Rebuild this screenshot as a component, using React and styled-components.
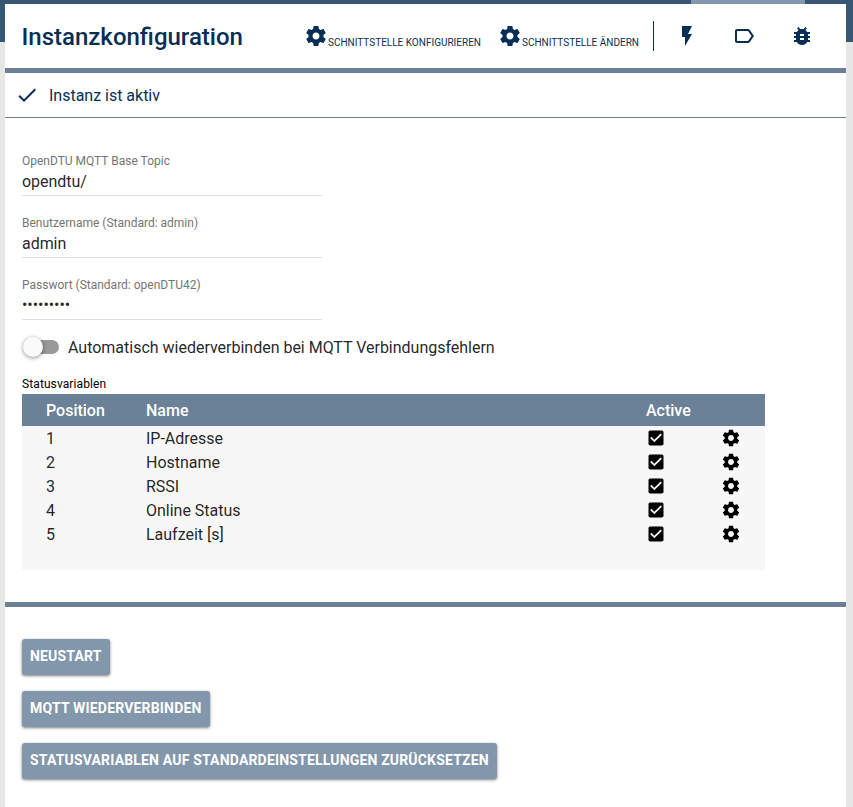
import React from 'react';
import styled, { createGlobalStyle } from 'styled-components';

const Global = createGlobalStyle`
  * { box-sizing: border-box; }
  body { margin: 0; background: #e6e6e6; font-family: Roboto, sans-serif; color: rgba(0,0,0,.87); overflow: hidden; }
`;

const Page = styled.div`
  height: 807px;
  padding: 4px 7px 0 5px;
  background: linear-gradient(#8297ab, #8297ab) 691px 0 / 114px 4px no-repeat,
    linear-gradient(#385775, #385775) 0 0 / 100% 42px no-repeat, #e6e6e6;
`;
const Dialog = styled.main`
  height: 803px;
  background: #fff;
`;
const Header = styled.header`
  display: flex;
  height: 69px;
  padding-left: 16.5px;
  border-bottom: 5px solid #6a8197;
  color: #072f55;
`;
const Title = styled.h1`
  width: 282.5px;
  margin: 0;
  font-size: 24px;
  font-weight: 500;
  line-height: 66px;
`;
const HeaderAction = styled.button`
  display: flex;
  width: ${p => p.$width}px;
  padding: 20px 0 0;
  border: 0;
  background: none;
  color: inherit;
  font: 400 10px/38px Roboto, sans-serif;
  text-transform: uppercase;
  white-space: nowrap;
`;
const Separator = styled.div`
  width: 1px;
  height: 30px;
  margin: 17px 21px 0 0;
  background: #072f55;
`;
const IconButton = styled.button`
  width: 24px;
  height: 24px;
  margin: 20px ${p => p.$gap}px 0 0;
  padding: 0;
  border: 0;
  background: none;
  color: inherit;
`;
const Icon = styled.svg`
  display: block;
  flex: none;
  width: ${p => p.$size || 24}px;
  height: ${p => p.$size || 24}px;
  fill: currentColor;
`;
const Text = styled.span`
  padding-top: 2px;
  font-size: 16px;
  line-height: 20px;
  letter-spacing: -.01px;
`;
const Status = styled.div`
  display: flex;
  align-items: center;
  gap: 10px;
  height: 45px;
  padding-left: 10px;
  border-bottom: 1px solid #6a8197;
  color: #072f55;
`;
const Form = styled.section`
  height: 489px;
  padding: 32px 17px 0;
  border-bottom: 5px solid #6a8197;
`;
const Field = styled.label`
  display: block;
  width: 300px;
  height: 46px;
  margin-bottom: 16px;
  border-bottom: 1px solid #e0e0e0;
`;
const FieldLabel = styled.span`
  display: block;
  height: 22px;
  color: #757575;
  font-size: 12px;
  line-height: 22px;
`;
const Input = styled.input`
  display: block;
  width: 100%;
  height: ${p => (p.type === 'password' ? 18 : 20)}px;
  padding: 0;
  border: 0;
  outline: 0;
  background: none;
  color: rgba(0,0,0,.87);
  font: 400 16px/20px Roboto, sans-serif;
  letter-spacing: -.05px;
`;
const ToggleRow = styled.div`
  display: flex;
  align-items: center;
  gap: 9px;
  height: 24px;
  margin-top: -1px;
`;
const Track = styled.div`
  display: flex;
  align-items: center;
  width: 35px;
  height: 14px;
  margin-left: 2px;
  border-radius: 7px;
  background: #999;
`;
const Thumb = styled.div`
  width: 20px;
  height: 20px;
  margin-left: -1px;
  border-radius: 50%;
  background: #fafafa;
  box-shadow: 0 1px 4px rgba(0,0,0,.45);
`;
const Caption = styled.div`
  height: 35px;
  padding-top: 17px;
  font-size: 12px;
  line-height: 16px;
  letter-spacing: .1px;
  color: #000;
`;
const Table = styled.div`
  width: 743px;
  height: 176px;
  background: #f7f7f7;
`;
const Row = styled.div`
  display: grid;
  grid-template-columns: 100px 500px 75px 1fr;
  align-items: center;
  height: ${p => (p.$head ? 32 : 24)}px;
  padding-left: 24px;
  background: ${p => (p.$head ? '#6a8197' : 'none')};
  color: ${p => (p.$head ? '#fff' : 'rgba(0,0,0,.87)')};
  font-weight: ${p => (p.$head ? 500 : 400)};
`;
const IconCell = styled.span`
  color: #000;
`;
const Actions = styled.section`
  display: flex;
  flex-direction: column;
  align-items: flex-start;
  gap: 16px;
  padding: 32px 17px;
`;
const Button = styled.button`
  height: 36px;
  padding: 0 8px 2px;
  border: 0;
  border-radius: 3px;
  background: #8297ab;
  box-shadow: 0 1px 3px rgba(0,0,0,.5);
  color: #fff;
  font: 700 14px/34px Roboto, sans-serif;
  letter-spacing: .175px;
  text-transform: uppercase;
  white-space: nowrap;
`;

const paths = {
  cog: 'M19.43 12.98c.04-.32.07-.64.07-.98s-.03-.66-.07-.98l2.11-1.65c.19-.15.24-.42.12-.64l-2-3.46c-.12-.22-.39-.3-.61-.22l-2.49 1c-.52-.4-1.08-.73-1.69-.98l-.38-2.65C14.46 2.18 14.25 2 14 2h-4c-.25 0-.46.18-.49.42l-.38 2.65c-.61.25-1.17.59-1.69.98l-2.49-1c-.23-.09-.49 0-.61.22l-2 3.46c-.13.22-.07.49.12.64l2.11 1.65c-.04.32-.07.65-.07.98s.03.66.07.98l-2.11 1.65c-.19.15-.24.42-.12.64l2 3.46c.12.22.39.3.61.22l2.49-1c.52.4 1.08.73 1.69.98l.38 2.65c.03.24.24.42.49.42h4c.25 0 .46-.18.49-.42l.38-2.65c.61-.25 1.17-.59 1.69-.98l2.49 1c.23.09.49 0 .61-.22l2-3.46c.12-.22.07-.49-.12-.64l-2.11-1.65zM12 15.5c-1.93 0-3.5-1.57-3.5-3.5s1.57-3.5 3.5-3.5 3.5 1.57 3.5 3.5-1.57 3.5-3.5 3.5z',
  flash: 'M7 2v11h3v9l7-12h-4l4-8z',
  label: 'M17.63 5.84C17.27 5.33 16.67 5 16 5L5 5.01C3.9 5.01 3 5.9 3 7v10c0 1.1.9 1.99 2 1.99L16 19c.67 0 1.27-.33 1.63-.84L22 12l-4.37-6.16zM16 17H5V7h11l3.55 5L16 17z',
  bug: 'M20 8h-2.81c-.45-.78-1.07-1.45-1.82-1.96L17 4.41 15.59 3l-2.17 2.17C12.96 5.06 12.49 5 12 5c-.49 0-.96.06-1.41.17L8.41 3 7 4.41l1.62 1.63C7.88 6.55 7.26 7.22 6.81 8H4v2h2.09c-.05.33-.09.66-.09 1v1H4v2h2v1c0 .34.04.67.09 1H4v2h2.81c1.04 1.79 2.97 3 5.19 3s4.15-1.21 5.19-3H20v-2h-2.09c.05-.33.09-.66.09-1v-1h2v-2h-2v-1c0-.34-.04-.67-.09-1H20V8zm-6 8h-4v-2h4v2zm0-4h-4v-2h4v2z',
  check: 'M9 16.17 4.83 12l-1.42 1.41L9 19 21 7l-1.41-1.41z',
  checkbox: 'M19 3H5c-1.11 0-2 .9-2 2v14c0 1.1.89 2 2 2h14c1.11 0 2-.9 2-2V5c0-1.1-.89-2-2-2zm-9 14l-5-5 1.41-1.41L10 14.17l7.59-7.59L19 8l-9 9z',
};
const Glyph = ({ name, size }) => (
  <Icon viewBox="0 0 24 24" $size={size} aria-hidden="true"><path d={paths[name]} /></Icon>
);

const fields = [
  ['OpenDTU MQTT Base Topic', 'opendtu/', 'text'],
  ['Benutzername (Standard: admin)', 'admin', 'text'],
  ['Passwort (Standard: openDTU42)', '123456789', 'password'],
];
const variables = ['IP-Adresse', 'Hostname', 'RSSI', 'Online Status', 'Laufzeit [s]'];
const commands = ['Neustart', 'MQTT wiederverbinden', 'Statusvariablen auf Standardeinstellungen zurücksetzen'];

export default function App() {
  return (
    <Page>
      <Global />
      <Dialog>
        <Header>
          <Title>Instanzkonfiguration</Title>
          <HeaderAction $width={194}><Glyph name="cog" />Schnittstelle konfigurieren</HeaderAction>
          <HeaderAction $width={155}><Glyph name="cog" />Schnittstelle ändern</HeaderAction>
          <Separator />
          <IconButton $gap={33}><Glyph name="flash" /></IconButton>
          <IconButton $gap={34}><Glyph name="label" /></IconButton>
          <IconButton $gap={0}><Glyph name="bug" /></IconButton>
        </Header>
        <Status><Glyph name="check" /><Text>Instanz ist aktiv</Text></Status>
        <Form>
          {fields.map(([label, value, type]) => (
            <Field key={label}>
              <FieldLabel>{label}</FieldLabel>
              <Input type={type} defaultValue={value} />
            </Field>
          ))}
          <ToggleRow>
            <Track><Thumb /></Track>
            <Text>Automatisch wiederverbinden bei MQTT Verbindungsfehlern</Text>
          </ToggleRow>
          <Caption>Statusvariablen</Caption>
          <Table>
            <Row $head><Text>Position</Text><Text>Name</Text><Text>Active</Text></Row>
            {variables.map((name, i) => (
              <Row key={name}>
                <Text>{i + 1}</Text>
                <Text>{name}</Text>
                <IconCell><Glyph name="checkbox" size={20} /></IconCell>
                <IconCell><Glyph name="cog" size={20} /></IconCell>
              </Row>
            ))}
          </Table>
        </Form>
        <Actions>
          {commands.map(c => <Button key={c}>{c}</Button>)}
        </Actions>
      </Dialog>
    </Page>
  );
}
